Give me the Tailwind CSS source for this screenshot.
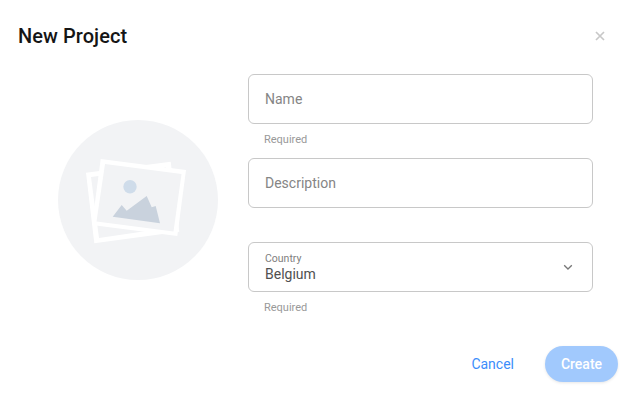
<!DOCTYPE html>
<html lang="en">
<head>
    <meta charset="UTF-8">
    <title>New Project</title>
    <script src="https://cdn.jsdelivr.net/npm/@tailwindcss/browser@4"></script>
</head>
<body class="bg-white font-['Roboto',sans-serif] overflow-hidden">
    <div class="w-[637px] h-[400px] flex flex-col">
        <!-- Header -->
        <div class="h-[74px] pl-[18px] pr-[31px] pb-[2px] flex items-center justify-between">
            <h1 class="text-[20px] leading-[24px] font-medium tracking-[0.06px] text-[#151515]">New Project</h1>
            <svg class="w-3 h-3 text-[#c8c8c8]" viewBox="0 0 12 12" fill="none" stroke="currentColor" stroke-width="1.7">
                <path d="M2 2l8 8M10 2l-8 8"/>
            </svg>
        </div>

        <!-- Body -->
        <div class="flex items-center pl-[58px] gap-[30px]">
            <svg class="w-40 h-40 shrink-0" viewBox="0 0 160 160">
                <circle cx="80" cy="80" r="80" fill="#f2f3f5"/>
                <polygon points="28,52.7 112.7,41.7 121.3,111.7 36.3,123.3" fill="#ffffff"/>
                <polygon points="33,57 108,47 116,107 41,118" fill="#f2f3f5"/>
                <polygon points="42.7,39 128,50 119.3,116 34,105" fill="#ffffff"/>
                <polygon points="47,44 123.5,54 115.5,111.5 38.5,101.5" fill="#f2f3f5"/>
                <circle cx="72" cy="66.7" r="6.7" fill="#cfdcea"/>
                <polygon points="54.7,96.7 63.7,85 68.7,90.7 88.7,76 93.7,87.3 97.7,86 102,103.3" fill="#c9d2dd"/>
            </svg>

            <div class="w-[345px] flex flex-col">
                <div class="h-[84px]">
                    <div class="h-[50px] border border-[#c8c8c8] rounded-[6px] px-4 flex items-center text-[14px] text-[#858585]">Name</div>
                    <p class="pl-4 mt-[9px] text-[11px] leading-[13px] text-[#999999]">Required</p>
                </div>
                <div class="h-[84px]">
                    <div class="h-[50px] border border-[#c8c8c8] rounded-[6px] px-4 flex items-center text-[14px] text-[#858585]">Description</div>
                </div>
                <div class="h-[84px]">
                    <div class="h-[50px] border border-[#c8c8c8] rounded-[6px] pl-4 pr-[19px] flex items-center justify-between">
                        <div class="flex flex-col">
                            <span class="text-[10.5px] leading-[13px] text-[#808080]">Country</span>
                            <span class="mt-px text-[14px] leading-[17px] text-[#505050]">Belgium</span>
                        </div>
                        <svg class="w-[10px] h-[10px] text-[#777777]" viewBox="0 0 10 10" fill="none" stroke="currentColor" stroke-width="1.3">
                            <path d="M1.2 3.2L5 7l3.8-3.8"/>
                        </svg>
                    </div>
                    <p class="pl-4 mt-[9px] text-[11px] leading-[13px] text-[#999999]">Required</p>
                </div>
            </div>
        </div>

        <!-- Footer -->
        <div class="mt-[20px] pr-[19px] flex items-center justify-end gap-[31px]">
            <button class="text-[14px] text-[#3b8dfb]">Cancel</button>
            <button class="w-[73px] h-[36px] rounded-full bg-[#a1c9fd] text-white text-[14px] font-medium shadow-[0_1px_3px_rgba(0,0,0,0.1)]">Create</button>
        </div>
    </div>
</body>
</html>
